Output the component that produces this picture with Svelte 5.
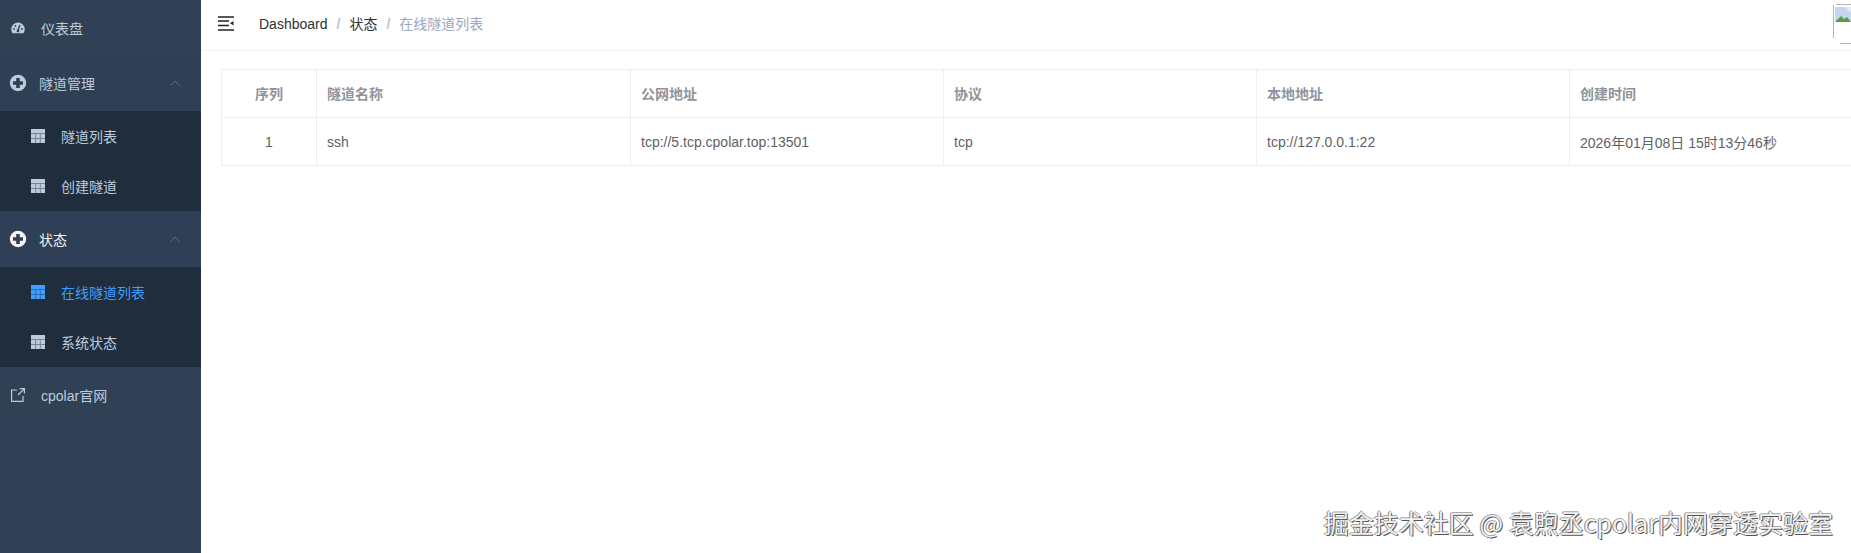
<script>
    const columns = ['序列', '隧道名称', '公网地址', '协议', '本地地址', '创建时间'];

    const tunnels = [
        ['1', 'ssh', 'tcp://5.tcp.cpolar.top:13501', 'tcp', 'tcp://127.0.0.1:22', '2026年01月08日 15时13分46秒']
    ];

    const groups = [
        {
            title: '隧道管理',
            items: [{ label: '隧道列表' }, { label: '创建隧道' }]
        },
        {
            title: '状态',
            active: true,
            items: [{ label: '在线隧道列表', active: true }, { label: '系统状态' }]
        }
    ];
</script>

<style>
    :global(body) {
        margin: 0;
        font-family: "Liberation Sans", "Noto Sans CJK SC", sans-serif;
        overflow: hidden;
    }

    .layout {
        display: flex;
        height: 553px;
        overflow: hidden;
        position: relative;
        background: #fff;
    }

    .sidebar {
        flex: 0 0 201px;
        background: #304156;
        color: #bfcbd9;
        font-size: 14px;
    }

    .row {
        display: flex;
        align-items: center;
        height: 55px;
        padding-left: 10px;
    }
    .row.link {
        height: 56px;
    }
    .row.title {
        padding-left: 9px;
        background: #2f3f55;
        box-shadow: inset 0 -1px 0 #33445a;
    }
    .row.active {
        color: #f4f4f5;
    }
    .row .label {
        margin-left: 16px;
    }
    .row.title .label {
        margin-left: 12px;
    }
    .chevron {
        margin-left: auto;
        margin-right: 21px;
    }

    .group .title {
        height: 56px;
    }
    .group:first-of-type .title {
        height: 55px;
    }

    .submenu {
        background: #1f2d3d;
    }
    .subrow {
        display: flex;
        align-items: center;
        height: 50px;
        padding-left: 31px;
    }
    .subrow .label {
        margin-left: 16px;
    }
    .subrow.active {
        color: #409eff;
    }

    .main {
        flex: 1 1 auto;
        min-width: 0;
    }

    .navbar {
        display: flex;
        align-items: center;
        height: 51px;
        border-bottom: 1px solid #f1f2f3;
        box-sizing: border-box;
        padding-left: 17px;
        position: relative;
        font-size: 14px;
    }
    .hamburger {
        margin-right: 25px;
        margin-top: -4px;
    }
    .breadcrumb {
        display: flex;
        align-items: baseline;
        padding-bottom: 4px;
    }
    .crumb {
        color: #303133;
    }
    .crumb.last {
        color: #97a8be;
    }
    .sep {
        color: #c0c4cc;
        margin: 0 9px;
        font-weight: bold;
    }

    .avatar {
        position: absolute;
        left: 1632px;
        top: 4px;
    }

    .content {
        padding: 18px 0 0 20px;
    }

    table {
        width: 1662px;
        border-collapse: collapse;
        table-layout: fixed;
        font-size: 14px;
        color: #606266;
        border-top: 1px solid #ebeef5;
        border-left: 1px solid #ebeef5;
        border-bottom: 1px solid #ebeef5;
    }
    th, td {
        height: 48px;
        padding: 0 10px;
        box-sizing: border-box;
        text-align: left;
        border-right: 1px solid #ebeef5;
        border-bottom: 1px solid #ebeef5;
    }
    th {
        padding-bottom: 2px;
        color: #909399;
        font-weight: bold;
    }
    th.num, td.num {
        text-align: center;
    }

    .watermark {
        position: absolute;
        right: 18px;
        bottom: 15px;
        font-family: "Noto Sans CJK SC", sans-serif;
        font-size: 25px;
        line-height: 32px;
        white-space: nowrap;
        color: #f2f2f2;
        text-shadow: 1px 1px 0 #555, -1px 0 0 #888, 0 -1px 0 #aaa;
    }
</style>

{#snippet circle(bg)}
    <svg width="18" height="18" viewBox="0 0 18 18">
        <circle cx="9" cy="9" r="8.2" fill="currentColor"/>
        <path d="M9 4V14M4 9H14" stroke={bg} stroke-width="3.6"/>
    </svg>
{/snippet}

{#snippet grid(color)}
    <svg width="14" height="14" viewBox="0 0 14 14">
        <rect width="14" height="14" fill={color}/>
        <path d="M0 4.5H14M0 9.5H14M4.7 4.5V14M9.3 4.5V14" stroke="#1f2d3d" stroke-width="0.8" opacity="0.55"/>
    </svg>
{/snippet}

{#snippet chevron()}
    <svg class="chevron" width="10" height="6" viewBox="0 0 10 6">
        <path d="M0.5 5.5L5 1L9.5 5.5" fill="none" stroke="#5a6b82" stroke-width="1"/>
    </svg>
{/snippet}

<div class="layout">
    <aside class="sidebar">
        <div class="row">
            <svg width="14" height="12" viewBox="0 0 14 12" style="margin-left: 1px">
                <path d="M7 0.5A6.7 6.7 0 0 0 0.3 7.2C0.3 8.8 0.8 10.2 1.6 11.2H12.4C13.2 10.2 13.7 8.8 13.7 7.2A6.7 6.7 0 0 0 7 0.5Z" fill="currentColor"/>
                <path d="M7 8L9 3" stroke="#304156" stroke-width="1.4"/>
                <circle cx="3" cy="7" r="0.9" fill="#304156"/>
                <circle cx="4.4" cy="4" r="0.9" fill="#304156"/>
                <circle cx="11" cy="7" r="0.9" fill="#304156"/>
                <circle cx="7" cy="9" r="1.4" fill="#304156"/>
            </svg>
            <span class="label">仪表盘</span>
        </div>

        {#each groups as group}
            <div class="group">
                <div class="row title" class:active={group.active}>
                    {@render circle('#2f3f55')}
                    <span class="label">{group.title}</span>
                    {@render chevron()}
                </div>
                <div class="submenu">
                    {#each group.items as item}
                        <div class="subrow" class:active={item.active}>
                            {@render grid(item.active ? '#409eff' : '#bfcbd9')}
                            <span class="label">{item.label}</span>
                        </div>
                    {/each}
                </div>
            </div>
        {/each}

        <div class="row link">
            <svg width="14" height="14" viewBox="0 0 14 14" style="margin-left: 1px">
                <path d="M6 2H0.6V13.4H12V8M7 7L13.2 0.8M8.6 0.6H13.4V5.4" fill="none" stroke="currentColor" stroke-width="1.2"/>
            </svg>
            <span class="label">cpolar官网</span>
        </div>
    </aside>

    <div class="main">
        <div class="navbar">
            <svg class="hamburger" width="16" height="15" viewBox="0 0 16 15">
                <path d="M0 1H16M0 5H11M0 9.5H11M0 14H16" stroke="#222" stroke-width="1.5"/>
                <path d="M12 7.2L15.5 5V9.5Z" fill="#222"/>
            </svg>
            <div class="breadcrumb">
                <span class="crumb">Dashboard</span>
                <span class="sep">/</span>
                <span class="crumb">状态</span>
                <span class="sep">/</span>
                <span class="crumb last">在线隧道列表</span>
            </div>

            <svg class="avatar" width="18" height="40" viewBox="0 0 18 40">
                <path d="M3 0.5H18M0.5 1V34M7 39.5H18" fill="none" stroke="#b5b5b5"/>
                <path d="M2 3H18V18H2Z" fill="#c7d6ef"/>
                <path d="M2 18L8 12L11 15L14 13L18 18Z" fill="#5a9e3c"/>
                <path d="M2 3H12L18 9V3Z" fill="#e4ebf7"/>
            </svg>
        </div>

        <div class="content">
            <table>
                <colgroup>
                    <col style="width: 95px">
                    <col style="width: 314px">
                    <col span="4" style="width: 313px">
                </colgroup>
                <thead>
                    <tr>
                        {#each columns as column, i}
                            <th class:num={i === 0}>{column}</th>
                        {/each}
                    </tr>
                </thead>
                <tbody>
                    {#each tunnels as tunnel}
                        <tr>
                            {#each tunnel as value, i}
                                <td class:num={i === 0}>{value}</td>
                            {/each}
                        </tr>
                    {/each}
                </tbody>
            </table>
        </div>
    </div>

    <div class="watermark">掘金技术社区 @ 袁煦丞cpolar内网穿透实验室</div>
</div>
